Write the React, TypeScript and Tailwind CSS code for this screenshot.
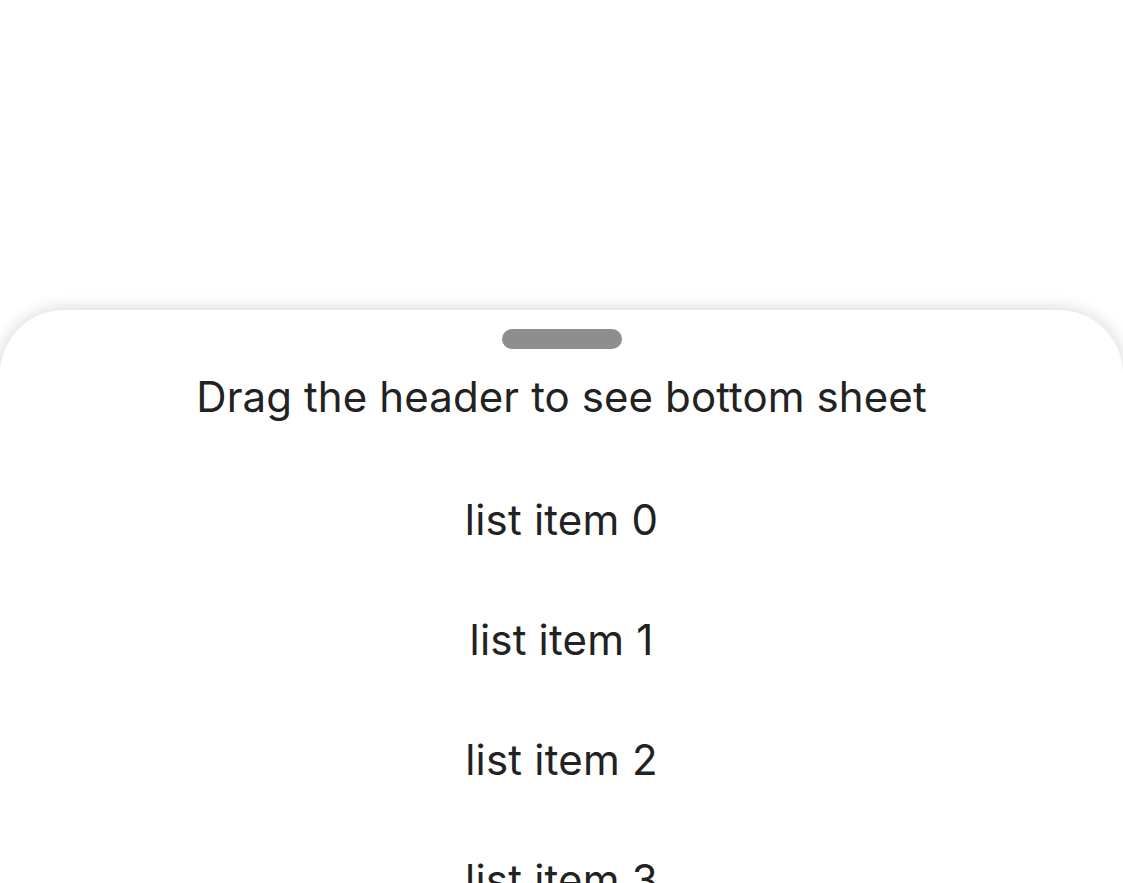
export default function App() {
  const items = [0, 1, 2, 3, 4]

  return (
    <div
      className="h-[883px] w-full overflow-hidden bg-white"
      style={{ fontFamily: "Inter, 'Noto Sans', sans-serif" }}
    >
      <div className="mt-[310px] rounded-t-[64px] bg-white shadow-[0_0_18px_rgba(0,0,0,0.18)]">
        <div className="flex justify-center pt-[19px]">
          <div className="h-[20px] w-[120px] rounded-full bg-[#8e8e8e]" />
        </div>
        <div className="mt-[17px] flex h-[60px] items-center justify-center text-[42px] tracking-[0.1px] text-[#222222]">
          Drag the header to see bottom sheet
        </div>
        <ul className="mt-[33px]">
          {items.map((i) => (
            <li
              key={i}
              className="flex h-[120px] items-center justify-center text-[42px] tracking-[0.2px] text-[#222222]"
            >
              list item {i}
            </li>
          ))}
        </ul>
      </div>
    </div>
  )
}
